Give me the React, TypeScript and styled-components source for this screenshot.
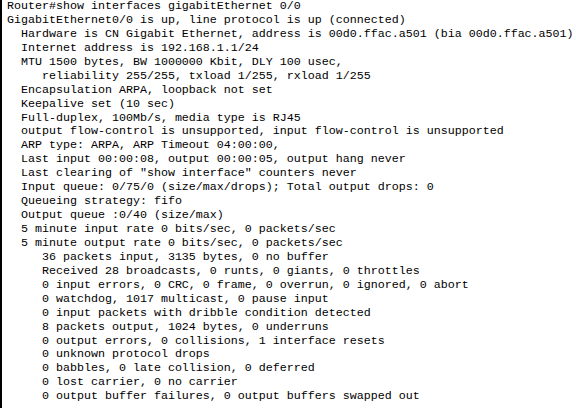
import React from "react";
import styled, { createGlobalStyle } from "styled-components";

const Global = createGlobalStyle`
  html, body { margin: 0; padding: 0; background: #ffffff; }
  #root { width: 576px; height: 408px; overflow: hidden; }
`;

const Terminal = styled.div`
  box-sizing: border-box;
  width: 576px;
  height: 408px;
  background: #ffffff;
  border-left: 2px solid #000000;
  padding: 0 0 0 5px;
  overflow: hidden;
`;

const Output = styled.pre`
  margin: 0;
  font-family: "Liberation Mono", "Courier New", monospace;
  font-size: 11.67px;
  line-height: 13.93px;
  color: #000000;
  white-space: pre;
`;

const lines = [
  "Router#show interfaces gigabitEthernet 0/0",
  "GigabitEthernet0/0 is up, line protocol is up (connected)",
  "  Hardware is CN Gigabit Ethernet, address is 00d0.ffac.a501 (bia 00d0.ffac.a501)",
  "  Internet address is 192.168.1.1/24",
  "  MTU 1500 bytes, BW 1000000 Kbit, DLY 100 usec,",
  "     reliability 255/255, txload 1/255, rxload 1/255",
  "  Encapsulation ARPA, loopback not set",
  "  Keepalive set (10 sec)",
  "  Full-duplex, 100Mb/s, media type is RJ45",
  "  output flow-control is unsupported, input flow-control is unsupported",
  "  ARP type: ARPA, ARP Timeout 04:00:00,",
  "  Last input 00:00:08, output 00:00:05, output hang never",
  "  Last clearing of \"show interface\" counters never",
  "  Input queue: 0/75/0 (size/max/drops); Total output drops: 0",
  "  Queueing strategy: fifo",
  "  Output queue :0/40 (size/max)",
  "  5 minute input rate 0 bits/sec, 0 packets/sec",
  "  5 minute output rate 0 bits/sec, 0 packets/sec",
  "     36 packets input, 3135 bytes, 0 no buffer",
  "     Received 28 broadcasts, 0 runts, 0 giants, 0 throttles",
  "     0 input errors, 0 CRC, 0 frame, 0 overrun, 0 ignored, 0 abort",
  "     0 watchdog, 1017 multicast, 0 pause input",
  "     0 input packets with dribble condition detected",
  "     8 packets output, 1024 bytes, 0 underruns",
  "     0 output errors, 0 collisions, 1 interface resets",
  "     0 unknown protocol drops",
  "     0 babbles, 0 late collision, 0 deferred",
  "     0 lost carrier, 0 no carrier",
  "     0 output buffer failures, 0 output buffers swapped out",
];

export default function App() {
  return (
    <>
      <Global />
      <Terminal>
        <Output>{lines.join("\n")}</Output>
      </Terminal>
    </>
  );
}
